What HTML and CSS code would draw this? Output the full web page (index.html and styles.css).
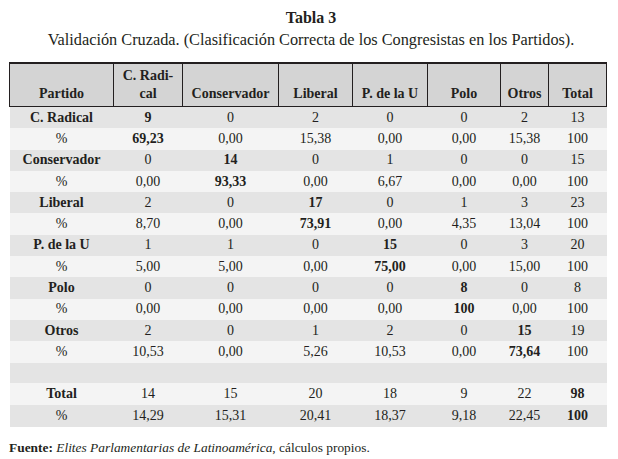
FILE: index.html
```html
<!DOCTYPE html>
<html lang="es">
<head>
<meta charset="utf-8">
<link rel="stylesheet" href="styles.css">
</head>
<body>
<div class="caption">
  <div class="title">Tabla 3</div>
  <div class="subtitle">Validación Cruzada. (Clasificación Correcta de los Congresistas en los Partidos).</div>
</div>
<table class="data">
  <colgroup>
    <col class="c1"><col class="c2"><col class="c3"><col class="c4"><col class="c5"><col class="c6"><col class="c7"><col class="c8">
  </colgroup>
  <thead>
    <tr>
      <th>Partido</th><th>C. Radi-<br>cal</th><th>Conservador</th><th>Liberal</th><th>P. de la U</th><th>Polo</th><th>Otros</th><th>Total</th>
    </tr>
  </thead>
  <tbody>
    <tr class="dark"><th>C. Radical</th><td class="b">9</td><td>0</td><td>2</td><td>0</td><td>0</td><td>2</td><td>13</td></tr>
    <tr class="light"><th class="pct">%</th><td class="b">69,23</td><td>0,00</td><td>15,38</td><td>0,00</td><td>0,00</td><td>15,38</td><td>100</td></tr>
    <tr class="dark"><th>Conservador</th><td>0</td><td class="b">14</td><td>0</td><td>1</td><td>0</td><td>0</td><td>15</td></tr>
    <tr class="light"><th class="pct">%</th><td>0,00</td><td class="b">93,33</td><td>0,00</td><td>6,67</td><td>0,00</td><td>0,00</td><td>100</td></tr>
    <tr class="dark"><th>Liberal</th><td>2</td><td>0</td><td class="b">17</td><td>0</td><td>1</td><td>3</td><td>23</td></tr>
    <tr class="light"><th class="pct">%</th><td>8,70</td><td>0,00</td><td class="b">73,91</td><td>0,00</td><td>4,35</td><td>13,04</td><td>100</td></tr>
    <tr class="dark"><th>P. de la U</th><td>1</td><td>1</td><td>0</td><td class="b">15</td><td>0</td><td>3</td><td>20</td></tr>
    <tr class="light"><th class="pct">%</th><td>5,00</td><td>5,00</td><td>0,00</td><td class="b">75,00</td><td>0,00</td><td>15,00</td><td>100</td></tr>
    <tr class="dark"><th>Polo</th><td>0</td><td>0</td><td>0</td><td>0</td><td class="b">8</td><td>0</td><td>8</td></tr>
    <tr class="light"><th class="pct">%</th><td>0,00</td><td>0,00</td><td>0,00</td><td>0,00</td><td class="b">100</td><td>0,00</td><td>100</td></tr>
    <tr class="dark"><th>Otros</th><td>2</td><td>0</td><td>1</td><td>2</td><td>0</td><td class="b">15</td><td>19</td></tr>
    <tr class="light"><th class="pct">%</th><td>10,53</td><td>0,00</td><td>5,26</td><td>10,53</td><td>0,00</td><td class="b">73,64</td><td>100</td></tr>
    <tr class="dark empty"><th></th><td></td><td></td><td></td><td></td><td></td><td></td><td></td></tr>
    <tr class="light tot"><th>Total</th><td>14</td><td>15</td><td>20</td><td>18</td><td>9</td><td>22</td><td class="b">98</td></tr>
    <tr class="dark tot"><th class="pct">%</th><td>14,29</td><td>15,31</td><td>20,41</td><td>18,37</td><td>9,18</td><td>22,45</td><td class="b">100</td></tr>
  </tbody>
</table>
<p class="source"><b>Fuente:</b> <i>Elites Parlamentarias de Latinoamérica</i>, cálculos propios.</p>
</body>
</html>
```
FILE: styles.css
```css
html, body {
  margin: 0;
  padding: 0;
  background: #fff;
}
body {
  font-family: "Liberation Serif", "Times New Roman", serif;
  color: #231f20;
  width: 618px;
}
.caption {
  text-align: center;
  padding-top: 8px;
  height: 55px;
  box-sizing: border-box;
}
.title {
  font-weight: bold;
  font-size: 16px;
  line-height: 20px;
  margin-left: 4px;
}
.subtitle {
  font-size: 16.3px;
  line-height: 23px;
  margin-left: 4px;
}
.data {
  border-collapse: collapse;
  margin-left: 9px;
  margin-top: 7px;
  width: 597px;
  table-layout: fixed;
  font-size: 14px;
}
.c1 { width: 104px; }
.c2 { width: 69px; }
.c3 { width: 96px; }
.c4 { width: 74px; }
.c5 { width: 75px; }
.c6 { width: 73px; }
.c7 { width: 48px; }
.c8 { width: 58px; }
.data thead th {
  background: #d4d4d4;
  border-top: 2px solid #231f20;
  border-bottom: 1px solid #231f20;
  border-left: 1px solid #231f20;
  border-right: 1px solid #231f20;
  height: 39px;
  padding: 0 2px 3px;
  vertical-align: bottom;
  font-weight: bold;
  line-height: 18px;
  text-align: center;
}
.data tbody th,
.data tbody td {
  height: 21.3px;
  padding: 0;
  text-align: center;
  line-height: 18px;
  font-weight: normal;
}
.data tbody th { font-weight: bold; }
.data tbody th.pct { font-weight: normal; }
.data tbody .b { font-weight: bold; }
.dark { background: #e4e4e4; }
.light { background: #f4f4f4; }
.data tbody tr.empty th,
.data tbody tr.empty td { height: 20px; }
.data tbody tr.tot th,
.data tbody tr.tot td { height: 22px; }
.source {
  margin: 12px 0 0 9px;
  font-size: 13.4px;
  line-height: 18px;
}
```
